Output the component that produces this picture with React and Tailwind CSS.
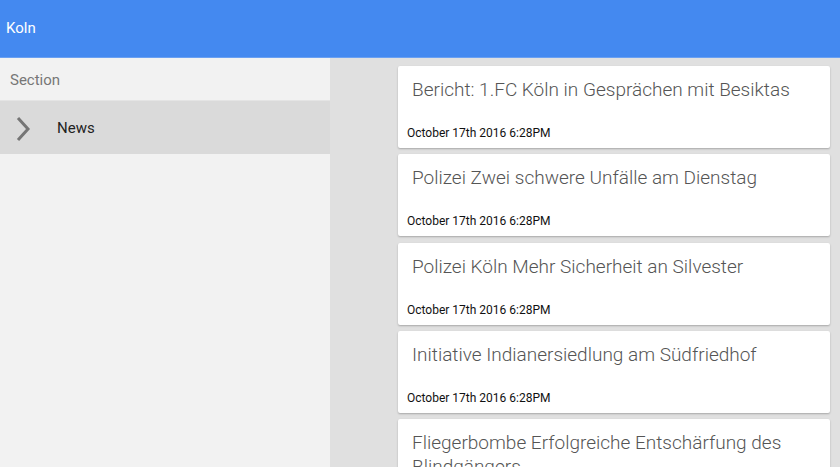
import React from 'react';

const articles = [
  'Bericht: 1.FC Köln in Gesprächen mit Besiktas',
  'Polizei Zwei schwere Unfälle am Dienstag',
  'Polizei Köln Mehr Sicherheit an Silvester',
  'Initiative Indianersiedlung am Südfriedhof',
  'Fliegerbombe Erfolgreiche Entschärfung des Blindgängers',
];

// single news card
function ArticleCard({ title }) {
  return (
    <div className="bg-white rounded-[2px] shadow-[0_1px_2px_rgba(0,0,0,0.25)] pt-[12px] pb-[7px] shrink-0">
      <div className="pl-[14px] pr-4 text-[19px] leading-[24px] font-light text-[#555]">{title}</div>
      <div className="pl-[9px] mt-[23px] text-[12px] leading-[16px] text-[#111]">October 17th 2016 6:28PM</div>
    </div>
  );
}

export default function App() {
  return (
    <div className="w-[840px] h-[467px] overflow-hidden flex flex-col font-['Roboto',sans-serif]">
      <div className="h-[58px] bg-[#4489f0] flex items-center pl-[6px] text-white text-[15px] border-b border-[#6aa0f2] shrink-0">
        Koln
      </div>
      <div className="flex flex-1 min-h-0">
        <div className="w-[330px] bg-[#f2f2f2] flex flex-col shrink-0">
          <div className="h-[43px] flex items-center pl-[10px] pt-[2px] text-[15px] text-[#777] border-b border-[#e4e4e4]">Section</div>
          <div className="h-[53px] bg-[#dadada] flex items-center pt-[2px]">
            <svg width="40" height="30" viewBox="0 0 40 30" className="ml-[6px]">
              <path d="M12 4 L22 15 L12 26" fill="none" stroke="#757575" strokeWidth="3" />
            </svg>
            <span className="ml-[11px] text-[15px] text-[#222]">News</span>
          </div>
        </div>
        <div className="flex-1 bg-[#e0e0e0] pl-[68px] pr-[10px] pt-[8px] flex flex-col gap-[6.3px] overflow-hidden">
          {articles.map((a) => (
            <ArticleCard key={a} title={a} />
          ))}
        </div>
      </div>
    </div>
  );
}
